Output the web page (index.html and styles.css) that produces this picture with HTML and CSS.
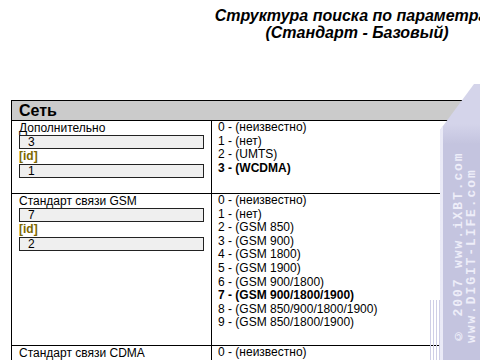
FILE: index.html
```html
<!DOCTYPE html>
<html lang="ru">
<head>
<meta charset="utf-8">
<link rel="stylesheet" href="styles.css">
</head>
<body>
<div class="page">
  <h1 class="title">Структура поиска по параметрам<br>(Стандарт - Базовый)</h1>
  <div class="params">
    <div class="section">Сеть</div>

    <div class="cell field">
      <div class="label">Дополнительно</div>
      <div class="box">3</div>
      <div class="id">[id]</div>
      <div class="box">1</div>
    </div>
    <div class="cell values">
      <div>0 - (неизвестно)</div>
      <div>1 - (нет)</div>
      <div>2 - (UMTS)</div>
      <div class="sel">3 - (WCDMA)</div>
    </div>

    <div class="cell field">
      <div class="label">Стандарт связи GSM</div>
      <div class="box">7</div>
      <div class="id">[id]</div>
      <div class="box">2</div>
    </div>
    <div class="cell values">
      <div>0 - (неизвестно)</div>
      <div>1 - (нет)</div>
      <div>2 - (GSM 850)</div>
      <div>3 - (GSM 900)</div>
      <div>4 - (GSM 1800)</div>
      <div>5 - (GSM 1900)</div>
      <div>6 - (GSM 900/1800)</div>
      <div class="sel">7 - (GSM 900/1800/1900)</div>
      <div>8 - (GSM 850/900/1800/1900)</div>
      <div>9 - (GSM 850/1800/1900)</div>
    </div>

    <div class="cell field">
      <div class="label">Стандарт связи CDMA</div>
      <div class="box">1</div>
      <div class="id">[id]</div>
      <div class="box">3</div>
    </div>
    <div class="cell values">
      <div>0 - (неизвестно)</div>
      <div>1 - (нет)</div>
      <div>2 - (CDMA 800)</div>
    </div>
  </div>
</div>

<div class="wm-band"></div>
<div class="wm-lines"></div>
<div class="wm-text">© 2007 www.iXBT.com<br>www.DIGIT-LIFE.com</div>
</body>
</html>
```

FILE: styles.css
```css
html, body {
  margin: 0;
  padding: 0;
  background: #fff;
  overflow: hidden;
  width: 480px;
  height: 360px;
}

body {
  position: relative;
  font-family: "Liberation Sans", Arial, sans-serif;
  color: #000;
}

.page {
  width: 714px;
}

.title {
  margin: 0 0 59px;
  padding-top: 7px;
  font-size: 16px;
  line-height: 17px;
  font-weight: bold;
  font-style: italic;
  text-align: center;
}

.params {
  margin-left: 11px;
  width: 692px;
  display: grid;
  grid-template-columns: 200px 1fr;
  border-top: 1px solid #000;
  border-left: 1px solid #000;
}

.section {
  grid-column: 1 / -1;
  background: #cbcbcb;
  height: 19px;
  line-height: 19px;
  padding-left: 7px;
  font-size: 16px;
  font-weight: bold;
  border-right: 1px solid #000;
  border-bottom: 1px solid #000;
}

.cell {
  border-right: 1px solid #000;
  border-bottom: 1px solid #000;
  padding-bottom: 15px;
  font-size: 12px;
}

.field {
  padding-left: 7px;
  padding-right: 7px;
}

.label {
  line-height: 14px;
}

.box {
  box-sizing: border-box;
  height: 14px;
  line-height: 12px;
  border: 1px solid #222;
  background: #efefef;
  padding-left: 8px;
}

.id {
  line-height: 15px;
  font-weight: bold;
  color: #7d6800;
}

.values {
  padding-left: 6px;
  line-height: 13.6px;
}

.sel {
  font-weight: bold;
}

.wm-band {
  position: absolute;
  left: 440px;
  top: 84px;
  width: 40px;
  height: 276px;
  background:
    linear-gradient(90deg, rgba(236,236,248,0.95) 0 3px, transparent 3px),
    linear-gradient(180deg, #d4d4ea 0 40px, #c4c4df 60px);
  clip-path: polygon(0 46px, 34px 0, 40px 0, 40px 100%, 0 100%);
}

.wm-lines {
  position: absolute;
  left: 430px;
  top: 300px;
  width: 10px;
  height: 60px;
  background: repeating-linear-gradient(90deg, #cfcfe6 0 1px, transparent 1px 3px);
}

.wm-text {
  position: absolute;
  left: 453px;
  top: 155px;
  height: 188px;
  writing-mode: vertical-rl;
  transform: rotate(180deg);
  font-family: "Liberation Mono", "DejaVu Sans Mono", monospace;
  font-weight: bold;
  font-size: 13px;
  line-height: 12.5px;
  letter-spacing: 1.9px;
  color: #eeeef9;
  white-space: nowrap;
}
```
